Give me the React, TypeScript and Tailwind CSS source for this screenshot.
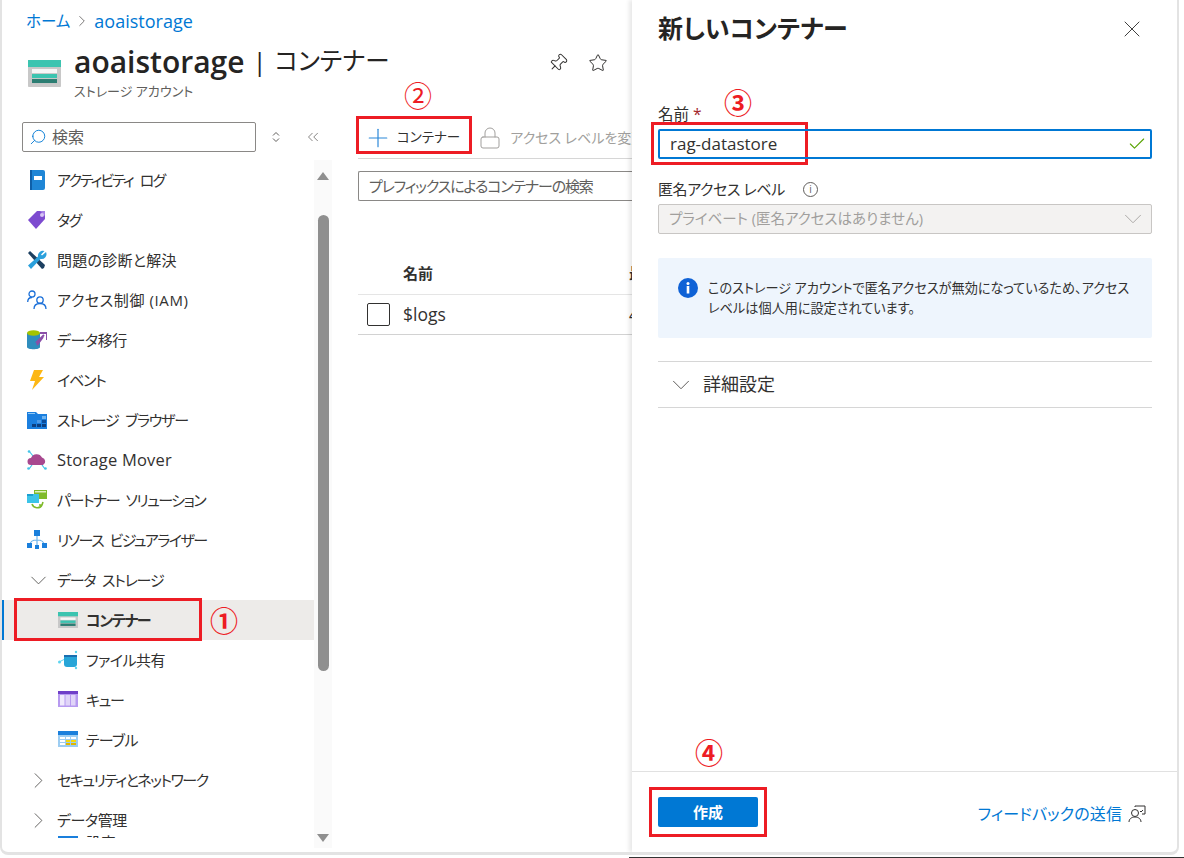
import { Check, ChevronDown, ChevronRight, ChevronsLeft, Lock, Pin, Plus, Search, Star, X } from "lucide-react";
import type { ReactNode } from "react";

const jp = "font-['Open_Sans','Noto_Sans_CJK_JP',sans-serif] [font-feature-settings:'palt']";

function ContainerIcon({ size = 20 }: { size?: number }) {
  return (
    <svg width={size} height={size * 0.82} viewBox="0 0 33 27">
      <rect width="33" height="27" rx="1" fill="#c8c8c8" />
      <rect width="33" height="7" fill="#3bc4b0" />
      <rect x="4" y="9" width="25" height="4" fill="#f6f6f6" />
      <rect x="4" y="14" width="25" height="4" fill="#3bc4b0" />
      <rect x="4" y="19" width="25" height="4" fill="#2b7d72" />
    </svg>
  );
}

const icons: Record<string, ReactNode> = {
  log: (
    <svg width="20" height="20" viewBox="0 0 20 20">
      <rect x="3" y="0" width="15" height="20" rx="2" fill="#1f86d6" />
      <rect x="3" y="0" width="2" height="20" fill="#0f5fa8" />
      <rect x="7" y="6" width="8" height="4" fill="#fff" />
    </svg>
  ),
  tag: (
    <svg width="20" height="20" viewBox="0 0 20 20">
      <path d="M1 10 10 1h8v8l-9 10z" fill="#7d4bd0" />
      <path d="M13 1h5v5z" fill="#a67fe6" />
      <circle cx="15" cy="5" r="2" fill="#d8c5f5" />
    </svg>
  ),
  tools: (
    <svg width="20" height="20" viewBox="0 0 20 20">
      <path d="M1 3 3 1l15 14-1 3-2 1z" fill="#1c3f60" />
      <path d="M19 2l-4 3.500-1-1L17.500 1A5 5 0 0 0 11 6.500L1 15.500l3 3.500 9.500-10A5 5 0 0 0 19 2z" fill="#2aa0dc" />
    </svg>
  ),
  iam: (
    <svg width="20" height="20" viewBox="0 0 20 20" fill="none" stroke="#1a6fd8" strokeWidth="1.3">
      <circle cx="5" cy="4" r="3" />
      <path d="M0.700 12c0-3 2-4.500 4.300-4.500" />
      <circle cx="13" cy="10" r="3.200" />
      <path d="M7 19c0-3.500 2.500-5.500 6-5.500s6 2 6 5.500" />
    </svg>
  ),
  migrate: (
    <svg width="20" height="20" viewBox="0 0 20 20">
      <path d="M0 3h13v14c0 3-13 3-13 0z" fill="#2f8dbd" />
      <ellipse cx="6.500" cy="3" rx="6.500" ry="2.800" fill="#a4c400" />
      <path d="M10 15 16 7M13 3h7v7" fill="none" stroke="#8a4fa8" strokeWidth="2" />
      <path d="M9 13l8-8" stroke="#8a4fa8" strokeWidth="2" />
    </svg>
  ),
  event: (
    <svg width="20" height="20" viewBox="0 0 20 20">
      <path d="M7 0h9l-4 7h5L5 20l3-9H3z" fill="#fcb714" />
    </svg>
  ),
  browser: (
    <svg width="20" height="20" viewBox="0 0 20 20">
      <path d="M0 2h9l2 2h9v15H0z" fill="#1b7fdf" />
      <rect x="1" y="3" width="7" height="1" fill="#8fc8f5" />
      <rect x="15" y="6" width="4" height="3" fill="#6fb4f0" />
      <rect x="10" y="10" width="4" height="3" fill="#4f9ae6" />
      <rect x="15" y="10" width="4" height="3" fill="#0d4d9c" />
      <rect x="10" y="14" width="4" height="3" fill="#0d3f80" />
      <rect x="15" y="14" width="4" height="3" fill="#0d3f80" />
      <rect x="5" y="14" width="4" height="3" fill="#0d3f80" />
    </svg>
  ),
  mover: (
    <svg width="20" height="20" viewBox="0 0 20 20">
      <path d="M2 1l4 5M2 19l3-4M18 19l-3-4" stroke="#44c4e8" strokeWidth="1.200" />
      <circle cx="2" cy="1.500" r="1.300" fill="#44c4e8" />
      <circle cx="1.500" cy="18.500" r="1.300" fill="#44c4e8" />
      <circle cx="18.500" cy="18.500" r="1.300" fill="#44c4e8" />
      <path d="M4 15a3.500 3.500 0 0 1 0-7 6 6 0 0 1 11-.5 4 4 0 0 1 1 7.500z" fill="#a8488f" />
    </svg>
  ),
  partner: (
    <svg width="20" height="20" viewBox="0 0 20 20">
      <rect x="7" y="0" width="13" height="9" fill="#7fba2a" />
      <rect x="8" y="1" width="11" height="1.500" fill="#dff0c0" />
      <rect x="0" y="4" width="12" height="9" fill="#3cc4e8" />
      <rect x="0" y="4" width="6" height="2" fill="#1c9fd0" />
      <path d="M5 14a5.500 5.500 0 0 0 10 1M15 15l-3 0M15 15l1-3" fill="none" stroke="#7fba2a" strokeWidth="1.600" />
    </svg>
  ),
  visual: (
    <svg width="20" height="20" viewBox="0 0 20 20">
      <path d="M10 6v12M3 15c0-4 4-5 7-5s7 1 7 5" fill="none" stroke="#6fb5ec" strokeWidth="1.200" />
      <rect x="7" y="0" width="6" height="6" fill="#1a7fdc" />
      <rect x="0" y="13" width="5" height="5" fill="#1a7fdc" />
      <rect x="15" y="13" width="5" height="5" fill="#1a7fdc" />
      <rect x="8" y="15" width="4" height="4" fill="#1a7fdc" />
    </svg>
  ),
  share: (
    <svg width="20" height="20" viewBox="0 0 20 20">
      <path d="M1 12 7 9" stroke="#5cd4f0" strokeWidth="1" />
      <circle cx="1.500" cy="12" r="1.500" fill="#5cd4f0" />
      <circle cx="18" cy="2" r="1.200" fill="#5cd4f0" />
      <circle cx="18" cy="18" r="1.200" fill="#5cd4f0" />
      <path d="M6 5h13v9a3 3 0 0 1-3 3H9a3 3 0 0 1-3-3z" fill="#27a5d8" />
      <path d="M6 5h13v2H6z" fill="#1b6fb0" />
    </svg>
  ),
  queue: (
    <svg width="20" height="20" viewBox="0 0 20 20">
      <rect y="1" width="20" height="16" fill="#b79af0" />
      <rect y="1" width="20" height="3" fill="#6f3fc8" />
      <rect x="2" y="5" width="4.500" height="10.500" fill="#f0eafc" />
      <rect x="7.500" y="5" width="4.500" height="10.500" fill="#e0d4f8" />
      <rect x="13" y="5" width="4.500" height="10.500" fill="#e0d4f8" />
    </svg>
  ),
  table: (
    <svg width="20" height="20" viewBox="0 0 20 20">
      <rect y="1" width="20" height="16" fill="#9dcdf2" />
      <rect y="1" width="20" height="4" fill="#1a7fdc" />
      <rect x="2" y="7" width="5" height="2" fill="#fff" />
      <rect x="8" y="7" width="4" height="2" fill="#fff" />
      <rect x="13" y="7" width="5" height="2" fill="#fff" />
      <rect x="2" y="10" width="5" height="2" fill="#fff" />
      <rect x="8" y="10" width="4" height="2" fill="#f4d90e" />
      <rect x="13" y="10" width="5" height="2" fill="#f4d90e" />
      <rect x="2" y="13" width="5" height="2" fill="#fff" />
      <rect x="8" y="13" width="4" height="2" fill="#e0b800" />
      <rect x="13" y="13" width="5" height="2" fill="#e0b800" />
    </svg>
  ),
};

// tracking は行ごとに合わせる
const topItems = [
  ["log", "アクティビティ ログ", "tracking-[-1.9px] [word-spacing:5px]"],
  ["tag", "タグ", "tracking-[-1.5px]"],
  ["tools", "問題の診断と解決", "tracking-[0.25px]"],
  ["iam", "アクセス制御 (IAM)", "tracking-[0.6px]"],
  ["migrate", "データ移行", "tracking-[-0.4px]"],
  ["event", "イベント", "tracking-[-1.2px]"],
  ["browser", "ストレージ ブラウザー", "tracking-[-1.2px] [word-spacing:4px]"],
  ["mover", "Storage Mover", "text-[16.5px] tracking-[0.2px]"],
  ["partner", "パートナー ソリューション", "tracking-[-1.5px] [word-spacing:4px]"],
  ["visual", "リソース ビジュアライザー", "tracking-[-1.5px] [word-spacing:4px]"],
];

function NavRow({ icon, label, text }: { icon: string; label: string; text: string }) {
  return (
    <div className="flex h-10 items-center gap-[10px] pl-[25px]">
      <span className="flex w-5 shrink-0 justify-center">{icons[icon]}</span>
      <span className={`text-[15px] whitespace-nowrap text-[#323130] ${text}`}>{label}</span>
    </div>
  );
}

function SubRow({ icon, label, active, text }: { icon: ReactNode; label: string; active?: boolean; text: string }) {
  return (
    <div className={`flex h-10 items-center gap-[8px] border-l-[2px] pl-[54px] ${active ? "border-[#0078d4] bg-[#edebe9]" : "border-transparent"}`}>
      <span className="flex w-5 shrink-0 justify-center">{icon}</span>
      <span className={`text-[15px] whitespace-nowrap text-[#323130] ${active ? "font-bold" : ""} ${text}`}>{label}</span>
    </div>
  );
}

function GroupRow({ open, label, text }: { open?: boolean; label: string; text: string }) {
  return (
    <div className="flex h-10 items-center gap-[9px] pl-[26px]">
      <span className="flex w-5 shrink-0 justify-center text-[#605e5c]">
        {open ? (
          <ChevronDown size={27} strokeWidth={0.85} className="shrink-0" />
        ) : (
          <ChevronRight size={27} strokeWidth={0.85} className="shrink-0" />
        )}
      </span>
      <span className={`text-[15px] whitespace-nowrap text-[#323130] ${text}`}>{label}</span>
    </div>
  );
}

function RedBox({ className }: { className: string }) {
  return <div className={`absolute border-[3px] border-[#ed1c24] ${className}`} />;
}

function Circled({ className, children }: { className: string; children: string }) {
  return <span className={`absolute font-['Noto_Sans_CJK_JP',sans-serif] text-[28px] leading-none text-[#ed1c24] ${className}`}>{children}</span>;
}

export default function App() {
  return (
    <div className={`relative h-[858px] w-[1184px] overflow-hidden bg-white ${jp}`}>
      <div className="mr-[5px] flex h-[855px] overflow-hidden rounded-b-[8px] border-r-[2px] border-b-[3px] border-l-[2px] border-[#e3e3e3] bg-white">
        {/* 左側のブレード */}
        <div className="flex w-[630px] shrink-0 flex-col">
          <div className="flex items-center pt-[10px] pl-6 text-[#0078d4]">
            <span className="text-[15.5px] leading-[22px]">ホーム</span>
            <ChevronRight size={18} strokeWidth={1.1} className="mx-[3px] text-[#605e5c]" />
            <span className="text-[18px] leading-[22px]">aoaistorage</span>
          </div>
          <div className="mt-[8px] flex h-[68px] pl-[26px]">
            <div className="pt-[20px]">
              <ContainerIcon size={33} />
            </div>
            <div className="ml-[13px]">
              <div className="flex h-[42px] items-center text-[#252423]">
                <span className="text-[30px] font-semibold">aoaistorage</span>
                <span className="mx-[8px] text-[26px] font-normal">|</span>
                <span className="text-[24.5px]">コンテナー</span>
              </div>
              <div className="text-[13px] leading-[18px] text-[#605e5c]">ストレージ アカウント</div>
            </div>
            <div className="mr-[24px] ml-auto flex gap-[20px] pt-[13px]">
              <Pin size={20} strokeWidth={1.2} className="rotate-45 text-[#323130]" />
              <Star size={20} strokeWidth={1.2} className="text-[#323130]" />
            </div>
          </div>
          <div className="flex min-h-0 flex-1">
            <div className="flex w-[330px] shrink-0 flex-col">
              <div className="mt-[14px] flex h-[38px] shrink-0 items-start pl-5">
                <div className="flex h-[30px] w-[234px] items-center gap-[5px] rounded-[2px] border border-[#8a8886] pl-[6px]">
                  <Search size={18} strokeWidth={1.2} className="-scale-x-100 text-[#0078d4]" />
                  <span className="text-[16px] text-[#605e5c]">検索</span>
                </div>
                <div className="ml-[14px] flex h-[30px] items-center text-[#605e5c]">
                  <svg width="12" height="12" viewBox="0 0 12 12" fill="none" stroke="currentColor">
                    <path d="M3 4.500 6 1.500 9 4.500M3 7.500l3 3 3-3" />
                  </svg>
                </div>
                <div className="ml-[22px] flex h-[30px] items-center text-[#605e5c]">
                  <ChevronsLeft size={18} strokeWidth={1} />
                </div>
              </div>
              <div className="flex min-h-0 flex-1">
                <div className="h-[678px] min-w-0 flex-1 overflow-hidden">
                  {topItems.map(([icon, label, text]) => (
                    <NavRow key={label} icon={icon} label={label} text={text} />
                  ))}
                  <GroupRow open label="データ ストレージ" text="tracking-[-1.2px] [word-spacing:4px]" />
                  <SubRow active icon={<ContainerIcon />} label="コンテナー" text="tracking-[-1.3px]" />
                  <SubRow icon={icons.share} label="ファイル共有" text="tracking-[-0.5px]" />
                  <SubRow icon={icons.queue} label="キュー" text="tracking-[-1.3px]" />
                  <SubRow icon={icons.table} label="テーブル" text="tracking-[-0.75px]" />
                  <GroupRow label="セキュリティとネットワーク" text="tracking-[-1.5px]" />
                  <GroupRow label="データ管理" text="tracking-[-0.4px]" />
                  <div className="-mt-[5px] flex h-[20px] items-start gap-[8px] pl-[56px]">
                    <span className="flex w-5 shrink-0 justify-center">{icons.table}</span>
                    <span className="text-[15px] leading-none text-[#323130]">設定</span>
                  </div>
                </div>
                {/* スクロールバー */}
                <div className="flex h-[688px] w-[18px] shrink-0 flex-col items-center bg-[#fafafa]">
                  <svg width="12" height="8" viewBox="0 0 12 8" className="mt-[12px] shrink-0">
                    <path d="M6 0 12 8H0z" fill="#8f8f8f" />
                  </svg>
                  <div className="mt-[35px] h-[456px] w-[11px] shrink-0 rounded-full bg-[#8f8f8f]" />
                  <svg width="12" height="8" viewBox="0 0 12 8" className="mt-auto mb-[6px] shrink-0">
                    <path d="M6 8 12 0H0z" fill="#8f8f8f" />
                  </svg>
                </div>
              </div>
            </div>
            {/* コンテナー一覧 */}
            <div className="min-w-0 flex-1 overflow-hidden pl-[26px] whitespace-nowrap">
              <div className="mt-[9px] flex h-[42px] items-center border-b border-[#d6d6d6] pl-[5px]">
                <Plus size={30} strokeWidth={0.95} className="shrink-0 text-[#2b88d8]" />
                <span className="ml-[4px] text-[13.5px] text-[#323130]">コンテナー</span>
                <Lock size={24} strokeWidth={1} className="ml-[18px] shrink-0 text-[#a19f9d]" />
                <span className="ml-[8px] text-sm text-[#a19f9d]">アクセス レベルを変更</span>
              </div>
              <div className="mt-[12px] flex h-[30px] items-center rounded-l-[2px] border border-r-0 border-[#8a8886] pl-[10px] text-[15px] tracking-[-1.15px] text-[#605e5c]">
                プレフィックスによるコンテナーの検索
              </div>
              <div className="mt-[52px] flex h-[42px] items-center border-b border-[#e5e5e5] pl-[45px] text-[15px] font-bold text-[#323130]">
                <span className="w-[226px] shrink-0">名前</span>
                <span>最終変更</span>
              </div>
              <div className="flex h-[40px] items-center border-b border-[#d2d2d2] pl-[9px] text-[#323130]">
                <span className="mr-[13px] h-[23px] w-[23px] shrink-0 rounded-[2px] border border-[#323130]" />
                <span className="w-[226px] shrink-0 text-[17.5px]">$logs</span>
                <span className="text-[16px]">4</span>
              </div>
            </div>
          </div>
        </div>

        {/* 新しいコンテナー パネル */}
        <div className="z-10 flex min-w-0 flex-1 flex-col shadow-[-3px_0_4px_rgba(0,0,0,0.09)]">
          <div className="flex h-[58px] items-center justify-between pr-[31px] pl-[26px]">
            <h1 className="text-[25px] font-semibold text-[#252423]">新しいコンテナー</h1>
            <X size={28} strokeWidth={0.8} className="text-[#323130]" />
          </div>
          <div className="flex-1 pr-[25px] pl-[26px]">
            <div className="mt-[45px] text-[15.5px] leading-[22px] text-[#323130]">
              名前 <span className="text-[#a4262c]">*</span>
            </div>
            <div className="mt-[4px] flex h-[30px] items-center justify-between rounded-[2px] border-2 border-[#0078d4] pr-[3px] pl-[10px] text-[17px] text-[#323130]">
              rag-datastore
              <Check size={20} strokeWidth={1.3} className="text-[#57a300]" />
            </div>
            <div className="mt-[19px] flex items-center text-[15px] leading-[22px] tracking-[-0.4px] text-[#323130]">
              匿名アクセス レベル
              <span className="ml-[18px] flex h-[15px] w-[15px] items-center justify-center rounded-full border border-[#605e5c] text-[10px] leading-none text-[#605e5c]">i</span>
            </div>
            <div className="mt-[4px] flex h-[30px] items-center justify-between rounded-[2px] border border-[#c8c6c4] bg-[#f3f2f1] pr-[3px] pl-[10px] text-[14.5px] text-[#a19f9d]">
              プライベート (匿名アクセスはありません)
              <ChevronDown size={30} strokeWidth={0.7} />
            </div>
            <div className="mt-[24px] flex h-[80px] rounded-[2px] bg-[#eef5fd] pt-[20px] pl-[20px]">
              <svg width="20" height="20" viewBox="0 0 20 20" className="shrink-0">
                <circle cx="10" cy="10" r="10" fill="#0f62d6" />
                <rect x="8.700" y="8" width="2.600" height="7.500" fill="#fff" />
                <circle cx="10" cy="5.500" r="1.500" fill="#fff" />
              </svg>
              <p className="ml-[10px] whitespace-nowrap text-[13.15px] leading-[20px] text-[#323130]">
                このストレージ アカウントで匿名アクセスが無効になっているため、アクセス
                <br />
                レベルは個人用に設定されています。
              </p>
            </div>
            <div className="mt-[23px] flex h-[47px] items-center gap-[7px] border-y border-[#d6d6d6] pl-[8px] text-[18px] text-[#323130]">
              <ChevronDown size={30} strokeWidth={0.8} className="text-[#605e5c]" />
              詳細設定
            </div>
          </div>
          <div className="flex h-[81px] shrink-0 items-start justify-between border-t border-[#e1e1e1] pt-[25px] pr-[31px] pl-[26px]">
            <button className="h-[30px] w-[100px] rounded-[2px] bg-[#0078d4] text-[15px] font-bold text-white">作成</button>
            <div className="flex items-center gap-[6px] pt-[5px] text-[16px] tracking-[0.1px] text-[#0078d4]">
              フィードバックの送信
              <svg width="18" height="18" viewBox="0 0 18 18" fill="none" stroke="#323130" strokeWidth="1">
                <circle cx="7" cy="8" r="3.500" />
                <path d="M1 17c0-3 2.500-5 6-5s6 2 6 5M7 2V1h10v8h-3M15 5l-2 2-1-1" />
              </svg>
            </div>
          </div>
        </div>
      </div>

      {/* 下端の暗い線 */}
      <div className="absolute right-0 bottom-0 left-[629px] h-px bg-[#333]" />

      {/* 手順の注釈 */}
      <RedBox className="top-[598px] left-[14px] h-[43px] w-[188px]" />
      <RedBox className="top-[116px] left-[356px] h-[38px] w-[116px]" />
      <RedBox className="top-[122px] left-[651px] h-[43px] w-[157px]" />
      <RedBox className="top-[787px] left-[649px] h-[50px] w-[118px]" />
      <Circled className="top-[606px] left-[210px] font-bold">①</Circled>
      <Circled className="top-[81px] left-[404px]">②</Circled>
      <Circled className="top-[88px] left-[724px] font-bold">③</Circled>
      <Circled className="top-[738px] left-[695px] font-bold">④</Circled>
    </div>
  );
}
